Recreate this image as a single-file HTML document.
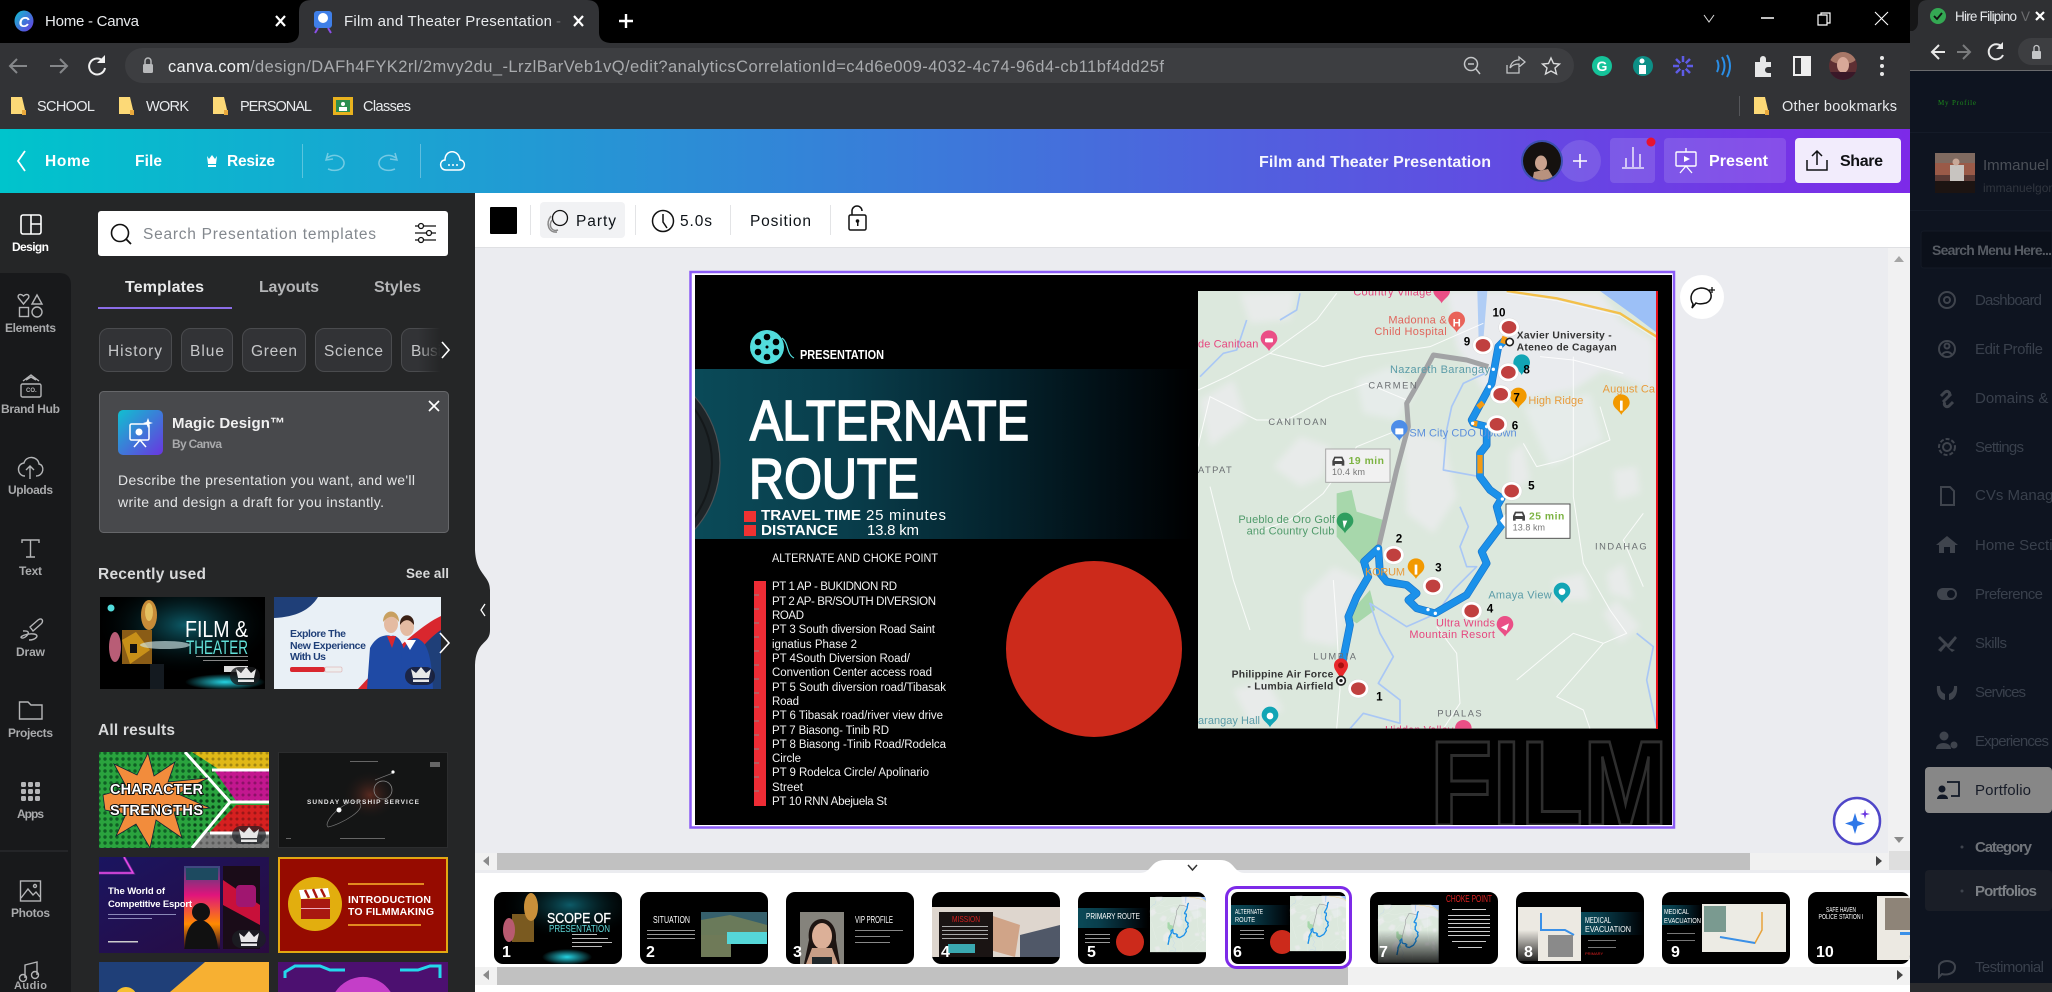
<!DOCTYPE html>
<html><head><meta charset="utf-8"><title>Film and Theater Presentation - Canva</title>
<style>html,body{margin:0;padding:0;background:#000;overflow:hidden;width:2052px;height:992px}svg{display:block;position:absolute;left:0;top:0}text{font-family:"Liberation Sans","DejaVu Sans",sans-serif}</style></head><body>
<svg width="2052" height="992" viewBox="0 0 2052 992" xmlns="http://www.w3.org/2000/svg">
<defs>
<filter id="soft" x="-10%" y="-10%" width="120%" height="120%"><feGaussianBlur stdDeviation="10"/></filter>
<linearGradient id="top" x1="0" x2="1" y1="0" y2="0"><stop offset="0" stop-color="#00c4cc"/><stop offset=".5" stop-color="#3d78da"/><stop offset="1" stop-color="#7d2ae8"/></linearGradient>
<linearGradient id="band" x1="0" x2="1" y1="0" y2="0"><stop offset="0" stop-color="#0a4a58"/><stop offset=".3" stop-color="#093e4c"/><stop offset=".62" stop-color="#04222c"/><stop offset=".88" stop-color="#010a0f"/><stop offset="1" stop-color="#000"/></linearGradient>
<linearGradient id="mg" x1="0" x2="1" y1="0" y2="1"><stop offset="0" stop-color="#10c0d0"/><stop offset="1" stop-color="#6a35e0"/></linearGradient>
<linearGradient id="fade" x1="0" x2="1" y1="0" y2="0"><stop offset="0" stop-color="#252627" stop-opacity="0"/><stop offset=".7" stop-color="#252627"/></linearGradient>
<linearGradient id="esp" x1="0" x2="1" y1="0" y2="1"><stop offset="0" stop-color="#1a1560"/><stop offset="1" stop-color="#2a0b40"/></linearGradient>
<linearGradient id="hot" x1="0" x2="0" y1="0" y2="1"><stop offset="0" stop-color="#3a4a80"/><stop offset=".35" stop-color="#e0147c"/><stop offset=".7" stop-color="#ff8a00"/><stop offset="1" stop-color="#200820"/></linearGradient>
<linearGradient id="fadeg" x1="0" x2="0" y1="0" y2="1"><stop offset="0" stop-color="#000" stop-opacity="0"/><stop offset="1" stop-color="#000" stop-opacity=".85"/></linearGradient>
<radialGradient id="glow"><stop offset="0" stop-color="#25d4e4"/><stop offset="1" stop-color="#25d4e4" stop-opacity="0"/></radialGradient>
<radialGradient id="orb"><stop offset="0" stop-color="#5a2a20"/><stop offset="1" stop-color="#141414" stop-opacity="0"/></radialGradient>
<radialGradient id="tglow"><stop offset="0" stop-color="#0d5b68"/><stop offset="1" stop-color="#000" stop-opacity="0"/></radialGradient>
<pattern id="dots" width="6" height="6" patternUnits="userSpaceOnUse"><circle cx="3" cy="3" r="1.7" fill="#0f5e24"/></pattern>
<pattern id="dots2" width="6" height="6" patternUnits="userSpaceOnUse"><circle cx="3" cy="3" r="1.5" fill="#000" fill-opacity=".28"/></pattern>
<path id="pin" d="M0 30C-6 17-25 9-25-7A25 25 0 1 1 25-7C25 9 6 17 0 30Z"/>
<path id="crown" d="M-8 3L-10-6-5-2 0-8 5-2 10-6 8 3ZM-8 4.500H8V7H-8Z"/>
<g id="car"><path d="M-18 12V-2L-12-15H12L18-2V12H10V7H-10V12Z" fill="#444"/><path d="M-9-10H9L12-2H-12Z" fill="#fff"/></g>
<clipPath id="cm"><rect x="24" y="33" width="1379" height="1313"/></clipPath>
<clipPath id="cb"><rect x="695" y="369" width="500" height="170"/></clipPath>
<clipPath id="cs"><rect x="695" y="275" width="977" height="550"/></clipPath>
<clipPath id="c1"><rect x="494" y="892" width="128" height="72" rx="9"/></clipPath>
<clipPath id="c2"><rect x="640" y="892" width="128" height="72" rx="9"/></clipPath>
<clipPath id="c3"><rect x="786" y="892" width="128" height="72" rx="9"/></clipPath>
<clipPath id="c4"><rect x="932" y="892" width="128" height="72" rx="9"/></clipPath>
<clipPath id="c5"><rect x="1078" y="892" width="128" height="72" rx="9"/></clipPath>
<clipPath id="c6"><rect x="1231" y="892" width="115" height="72" rx="7"/></clipPath>
<clipPath id="c7"><rect x="1370" y="892" width="128" height="72" rx="9"/></clipPath>
<clipPath id="c8"><rect x="1516" y="892" width="128" height="72" rx="9"/></clipPath>
<clipPath id="c9"><rect x="1662" y="892" width="128" height="72" rx="9"/></clipPath>
<clipPath id="c10"><rect x="1808" y="892" width="102" height="72" rx="9"/></clipPath>
<clipPath id="p1"><rect x="99" y="752" width="170" height="96"/></clipPath>
<clipPath id="p3"><rect x="99" y="857" width="170" height="96"/></clipPath>
<clipPath id="p5"><rect x="99" y="962" width="170" height="30"/></clipPath>
<clipPath id="p6"><rect x="278" y="962" width="170" height="30"/></clipPath>
<clipPath id="r1"><rect x="100" y="597" width="165" height="92"/></clipPath>
<clipPath id="r2"><rect x="274" y="597" width="167" height="92"/></clipPath>
<clipPath id="av"><circle cx="1542" cy="161" r="19"/></clipPath>
<clipPath id="av2"><circle cx="1843" cy="66" r="14"/></clipPath>

<g id="mapbase">
<rect x="24" y="33" width="1379" height="1313" fill="#dce8dd"/>
<g filter="url(#soft)">
<path d="M770 33H1230L1290 120 1390 180V330L1240 270 1150 330 1000 360 880 330 800 200Z" fill="#e9ebee"/>
<path d="M330 470L420 500 400 590 330 620 250 560ZM640 450L760 480 800 650 730 760 650 700ZM340 1080L440 1100 470 1000 520 900 430 860 340 950ZM130 1230L230 1200 280 1290 180 1330ZM1090 900L1180 880 1200 960 1100 960ZM960 520L1000 490 1020 600 960 640ZM30 360L130 300 170 420 60 500ZM1270 570L1340 560 1350 640 1280 660ZM150 40L320 33 300 120 180 130ZM1250 880L1300 850 1330 960 1260 940ZM1240 1000L1280 960 1350 1040 1290 1090Z" fill="#e8ebea"/>
<path d="M500 300L600 260 680 330 620 420 520 400ZM1000 380L1200 340 1240 480 1080 560Z" fill="#e6ecea"/>
</g>
<path d="M440 640L485 630 500 695 580 720 560 805 510 850 440 770ZM540 930L555 990 500 1030 470 1010Z" fill="#a7d7ab"/>
<path d="M1230 33H1403V160L1330 105Z" fill="#9cc0f7"/>
<path d="M862 33H892L880 180H866Z" fill="#b0cdf5"/>
<g fill="none" stroke="#a9c7f5" stroke-width="5" stroke-linejoin="round">
<path d="M885 280L820 310 785 380 770 450 760 570 870 590"/>
<path d="M810 680L835 740 810 800 830 860 860 860 790 930 740 1000 650 1040 540 970 570 1060 610 1130 565 1210 630 1260 630 1330 520 1300 480 1346"/>
<path d="M30 290L100 220 140 210 170 120M330 40L320 90 270 120"/>
<path d="M1340 1060L1390 1100 1370 1200 1400 1340"/>
</g>
<g fill="none" stroke="#fff" stroke-width="3" stroke-linejoin="round" opacity=".85">
<path d="M24 330L110 290 240 220 380 120 440 40"/>
<path d="M240 220L400 260 520 230 720 200 880 130"/>
<path d="M24 500L60 350 200 420 290 420 420 350 530 310 650 360"/>
<path d="M650 440L500 500 400 640 300 720 190 760"/>
<path d="M1200 1346L1180 1290 1100 1250 1240 1090 1310 1060 1260 990 1180 850 1150 650 1150 230"/>
<path d="M440 1346L450 1230 440 1040 430 900"/>
<path d="M740 1040L800 1120 810 1270 760 1346"/>
<path d="M1000 490L1040 560 1120 540 1260 480 1230 380"/>
<path d="M980 1200L1100 1100 1150 1060 1240 1090M60 620L130 900 180 1050M1050 230L1150 240 1300 280M1360 700L1300 780 1360 920"/>
</g>
<path d="M950 33L1100 55 1290 100 1400 170" fill="none" stroke="#f3c04a" stroke-width="7"/>
<path d="M950 40L1100 62 1290 107 1400 178" fill="none" stroke="#fff" stroke-width="1.500"/>
<path d="M565 805L620 570 655 440 650 370 690 300 730 225 830 240 895 260" fill="none" stroke="#a2a3a5" stroke-width="15" stroke-linejoin="round"/>
<path d="M453 1170L465 1110 480 1035 475 1010 500 950 535 890 522 845 565 805 570 880 590 905 650 915 680 940 655 960 680 985 735 1000 830 945 890 850 875 815 935 735 920 680 935 655 900 630 870 590 870 520 890 495 890 440 850 430 845 420 905 310 925 200 945 180" fill="none" stroke="#1a74c8" stroke-width="23" stroke-linejoin="round"/>
<path d="M453 1170L465 1110 480 1035 475 1010 500 950 535 890 522 845 565 805 570 880 590 905 650 915 680 940 655 960 680 985 735 1000 830 945 890 850 875 815 935 735 920 680 935 655 900 630 870 590 870 520 890 495 890 440 850 430 845 420 905 310 925 200 945 180" fill="none" stroke="#1b91ea" stroke-width="19" stroke-linejoin="round"/>
<path d="M870 525V580M864 382L880 368M850 430L862 432M938 190L945 170" fill="none" stroke="#f39a13" stroke-width="16"/>
<circle cx="565" cy="806" r="5" fill="#fff"/><circle cx="714" cy="989" r="5" fill="#fff"/><circle cx="736" cy="1000" r="5" fill="#fff"/><circle cx="937" cy="657" r="5" fill="#fff"/><circle cx="890" cy="440" r="5" fill="#fff"/><circle cx="848" cy="430" r="5" fill="#fff"/><circle cx="898" cy="320" r="5" fill="#fff"/><circle cx="910" cy="268" r="5" fill="#fff"/><circle cx="932" cy="202" r="5" fill="#fff"/>
</g>
<path id="route" d="M453 1170L465 1110 480 1035 475 1010 500 950 535 890 522 845 565 805 570 880 590 905 650 915 680 940 655 960 680 985 735 1000 830 945 890 850 875 815 935 735 920 680 935 655 900 630 870 590 870 520 890 495 890 440 850 430 845 420 905 310 925 200 945 180" fill="none" stroke="#1b91ea" stroke-width="30" stroke-linejoin="round"/>
</defs>

<!-- browser chrome -->
<rect width="2052" height="992" fill="#000"/>
<rect y="43" width="1910" height="86" fill="#323336"/>
<ellipse cx="24" cy="21" rx="9.500" ry="10.500" fill="url(#mg)"/><text x="24" y="27" font-size="15" font-style="italic" font-weight="700" fill="#fff" text-anchor="middle">C</text>
<text x="45" y="26" font-size="15" fill="#e8eaed" textLength="94">Home - Canva</text>
<path d="M276 16L285 26M285 16L276 26" stroke="#fff" stroke-width="2.200"/>
<path d="M286 43C296 43 299 38 299 32V12Q299 0 311 0H587Q599 0 599 12V32C599 38 602 43 612 43Z" fill="#323336"/>
<rect x="314" y="11" width="18" height="17" rx="3" fill="#3f7fe8"/><circle cx="323" cy="18" r="5" fill="#fff"/><path d="M318 28L315 33M328 28L331 33" stroke="#8a4fe8" stroke-width="2"/>
<text x="344" y="26" font-size="15" fill="#e8eaed" textLength="208">Film and Theater Presentation</text><text x="556" y="26" font-size="15" fill="#6c6d70">- P</text>
<rect x="566" y="6" width="8" height="28" fill="#323336"/>
<path d="M574 16L583 26M583 16L574 26" stroke="#fff" stroke-width="2.200"/>
<path d="M626 14V28M619 21H633" stroke="#fff" stroke-width="2.400"/>
<path d="M1704 15L1709 22 1714 15" fill="none" stroke="#ddd" stroke-width="1"/>
<path d="M1761 18H1774" stroke="#fff" stroke-width="1.500"/>
<path d="M1818 15H1827V25H1818ZM1821 15V13H1830V23H1827" fill="none" stroke="#fff" stroke-width="1.200"/>
<path d="M1875 12L1888 25M1888 12L1875 25" stroke="#fff" stroke-width="1.100"/>

<path d="M27 66H10M17 59L10 66 17 73" fill="none" stroke="#85878a" stroke-width="2"/>
<path d="M50 66H67M60 59L67 66 60 73" fill="none" stroke="#85878a" stroke-width="2"/>
<path d="M103 61A8 8 0 1 0 105 68" fill="none" stroke="#f1f1f1" stroke-width="2"/><path d="M105 55V63H97Z" fill="#f1f1f1"/>
<rect x="125" y="48" width="1449" height="35" rx="17.500" fill="#3d3e41"/>
<rect x="143" y="64" width="10" height="9" rx="1.500" fill="#b8b9bb"/><path d="M145 64V61A3 3 0 0 1 151 61V64" fill="none" stroke="#b8b9bb" stroke-width="1.500"/>
<text x="168" y="72" font-size="16.500" fill="#f1f3f4" textLength="82">canva.com</text>
<text x="250" y="72" font-size="16.500" fill="#a9abae" textLength="914">/design/DAFh4FYK2rl/2mvy2du_-LrzlBarVeb1vQ/edit?analyticsCorrelationId=c4d6e009-4032-4c74-96d4-cb11bf4dd25f</text>
<circle cx="1471" cy="64" r="6.500" fill="none" stroke="#c4c6c8" stroke-width="1.500"/><path d="M1476 69L1480 74M1468 64H1474" stroke="#c4c6c8" stroke-width="1.500"/>
<path d="M1507 65V73H1519V68M1510 68C1511 62 1515 60 1519 60V57L1525 62 1519 67V64C1515 64 1512 65 1510 68Z" fill="none" stroke="#c4c6c8" stroke-width="1.300"/>
<path d="M1551 58L1553.500 63.500 1559.500 64 1555 68 1556.500 74 1551 71 1545.500 74 1547 68 1542.500 64 1548.500 63.500Z" fill="none" stroke="#dadbdc" stroke-width="1.400"/>
<circle cx="1602" cy="66" r="10" fill="#15c39a"/><text x="1602" y="71" font-size="14" font-weight="700" fill="#fff" text-anchor="middle">G</text>
<circle cx="1643" cy="66" r="10" fill="#0d8f86"/><circle cx="1642" cy="61" r="2.500" fill="#fff"/><path d="M1639 65H1646V74H1639Z" fill="#fff"/>
<g stroke="#5e5ce6" stroke-width="2.500"><path d="M1683 56V76M1673 66H1693M1676 59L1690 73M1690 59L1676 73"/></g><circle cx="1683" cy="66" r="4" fill="#323336"/>
<path d="M1717 60Q1720 66 1717 72M1722 57Q1727 66 1722 75M1727 55Q1733 66 1727 77" fill="none" stroke="#2a8fe8" stroke-width="2"/>
<path d="M1755 62H1760V59A3 3 0 0 1 1766 59V62H1771V67H1768A3 3 0 0 0 1768 73H1771V77H1755Z" fill="#e6e7e8"/>
<rect x="1794" y="57" width="16" height="18" fill="none" stroke="#eee" stroke-width="2"/><rect x="1801" y="57" width="9" height="18" fill="#eee"/>
<circle cx="1843" cy="66" r="14" fill="#5e2f33"/><g clip-path="url(#av2)"><ellipse cx="1843" cy="57" rx="14" ry="7" fill="#a87868"/><ellipse cx="1843" cy="65" rx="6" ry="8" fill="#d8a898"/><rect x="1829" y="72" width="28" height="10" fill="#3a1828"/></g>
<circle cx="1882" cy="58" r="2" fill="#e8e8e8"/><circle cx="1882" cy="66" r="2" fill="#e8e8e8"/><circle cx="1882" cy="74" r="2" fill="#e8e8e8"/>

<g fill="#fcd977"><path d="M11 97H22L26 114H11Z"/><path d="M119 97H130L134 114H119Z"/><path d="M213 97H224L228 114H213Z"/><path d="M1754 97H1765L1769 114H1754Z"/></g>
<g fill="#e9a93c"><rect x="22" y="110" width="4" height="5"/><rect x="130" y="110" width="4" height="5"/><rect x="224" y="110" width="4" height="5"/><rect x="1765" y="110" width="4" height="5"/></g>
<text x="37" y="111" font-size="14.500" fill="#e8eaed" textLength="58">SCHOOL</text>
<text x="146" y="111" font-size="14.500" fill="#e8eaed" textLength="43">WORK</text>
<text x="240" y="111" font-size="14.500" fill="#e8eaed" textLength="72">PERSONAL</text>
<rect x="333" y="97" width="20" height="18" fill="#e8b21e"/><rect x="336" y="100" width="14" height="12" fill="#2c8f4f"/><circle cx="343" cy="104" r="2" fill="#fff"/><rect x="339" y="107" width="8" height="4" fill="#fff"/>
<text x="363" y="111" font-size="14.500" fill="#e8eaed" textLength="48">Classes</text>
<rect x="1739" y="96" width="1" height="20" fill="#55565a"/>
<text x="1782" y="111" font-size="14.500" fill="#e8eaed" textLength="115">Other bookmarks</text>

<!-- canva top bar -->
<rect y="129" width="1910" height="64" fill="url(#top)"/>
<path d="M25 151L18 161 25 171" fill="none" stroke="#fff" stroke-width="1.800"/>
<text x="45" y="166" font-size="15.500" font-weight="700" fill="#fff" textLength="45">Home</text>
<text x="135" y="166" font-size="15.500" font-weight="700" fill="#fff" textLength="27">File</text>
<path d="M207 156L209 159 212 155 215 159 217 156 216 164H208ZM208 165H216V167H208Z" fill="#fff"/>
<text x="227" y="166" font-size="15.500" font-weight="700" fill="#fff" textLength="48">Resize</text>
<rect x="302" y="144" width="1" height="34" fill="#fff" opacity=".3"/><rect x="420" y="144" width="1" height="34" fill="#fff" opacity=".3"/>
<path d="M328 153L326 160 333 159M327 158C336 152 345 158 344 164 343 170 335 172 328 169" fill="none" stroke="#fff" stroke-opacity=".4" stroke-width="1.500"/>
<path d="M395 153L397 160 390 159M396 158C387 152 378 158 379 164 380 170 388 172 395 169" fill="none" stroke="#fff" stroke-opacity=".4" stroke-width="1.500"/>
<path d="M446 170C439 170 439 160 445 160 445 149 459 149 460 160 466 160 466 170 459 170Z" fill="none" stroke="#fff" stroke-width="1.500"/><g fill="#fff"><circle cx="449" cy="165" r="1"/><circle cx="453" cy="165" r="1"/><circle cx="457" cy="165" r="1"/></g>
<text x="1259" y="167" font-size="16" font-weight="700" fill="#fff" fill-opacity=".95" textLength="232">Film and Theater Presentation</text>
<circle cx="1580" cy="161" r="21" fill="#fff" fill-opacity=".12"/><path d="M1580 154V168M1573 161H1587" stroke="#fff" stroke-width="1.600"/>
<circle cx="1542" cy="161" r="21" fill="#3c4fb0"/><circle cx="1542" cy="161" r="19" fill="#15110f"/><g clip-path="url(#av)"><ellipse cx="1541" cy="163" rx="6" ry="7.500" fill="#c9a28e"/><path d="M1534 172L1548 169 1556 182H1532Z" fill="#b8927e"/></g>
<rect x="1610" y="138" width="45" height="45" rx="4" fill="#fff" fill-opacity=".13"/>
<path d="M1622 168H1644M1626 167V158M1633 167V147M1640 167V154" stroke="#fff" stroke-width="1.300"/>
<circle cx="1651" cy="142" r="4.500" fill="#e8132f"/>
<rect x="1664" y="138" width="122" height="45" rx="4" fill="#fff" fill-opacity=".13"/>
<rect x="1676" y="152" width="20" height="14" rx="1" fill="none" stroke="#fff" stroke-width="1.400"/><path d="M1684 156L1690 159 1684 162Z" fill="#fff"/><path d="M1686 148V152M1680 173L1686 166 1692 173" fill="none" stroke="#fff" stroke-width="1.300"/>
<text x="1709" y="166" font-size="16" font-weight="700" fill="#fff" textLength="59">Present</text>
<rect x="1795" y="138" width="106" height="45" rx="4" fill="#f2ecfc"/>
<path d="M1807 160V170H1827V160M1817 165V151M1812 156L1817 151 1822 156" fill="none" stroke="#101114" stroke-width="1.500"/>
<text x="1840" y="166" font-size="16" font-weight="700" fill="#101114" textLength="43">Share</text>

<!-- canvas -->
<rect x="475" y="193" width="1435" height="799" fill="#ebecf0"/>
<rect x="475" y="193" width="1435" height="54" fill="#fff"/>
<rect x="475" y="247" width="1435" height="1" fill="#dfe0e3"/>
<rect x="490" y="207" width="27" height="27" rx="1" fill="#000"/>
<rect x="530" y="205" width="1" height="30" fill="#e3e4e6"/>
<rect x="540" y="202" width="85" height="36" rx="4" fill="#f1f2f4"/>
<circle cx="560" cy="218" r="7.500" fill="none" stroke="#111" stroke-width="1.300"/><path d="M552 220C548 226 552 232 558 230M551 216C545 224 549 233 557 232" fill="none" stroke="#888" stroke-width="1.500"/>
<text x="576" y="226" font-size="15.500" fill="#0e1318" textLength="40">Party</text>
<rect x="635" y="205" width="1" height="30" fill="#e3e4e6"/>
<circle cx="663" cy="221" r="10.500" fill="none" stroke="#111" stroke-width="1.500"/><path d="M663 214V222L667 228" fill="none" stroke="#111" stroke-width="1.500"/>
<text x="680" y="226" font-size="15.500" fill="#0e1318" textLength="32">5.0s</text>
<rect x="730" y="205" width="1" height="30" fill="#e3e4e6"/>
<text x="750" y="226" font-size="15.500" fill="#0e1318" textLength="61">Position</text>
<rect x="830" y="205" width="1" height="30" fill="#e3e4e6"/>
<rect x="849" y="215" width="17" height="15" rx="1.500" fill="none" stroke="#111" stroke-width="1.500"/><path d="M852 215V211A5 5 0 0 1 862 211" fill="none" stroke="#111" stroke-width="1.500"/><circle cx="857.500" cy="221" r="1.800" fill="#111"/><rect x="857" y="221" width="1.500" height="5" fill="#111"/>

<!-- vertical scroll -->
<rect x="1888" y="248" width="22" height="605" fill="#f1f1f2"/>
<path d="M1894 262L1899 256 1904 262Z" fill="#a5a5a5"/><path d="M1894 837L1899 843 1904 837Z" fill="#8a8a8a"/>

<!-- slide -->
<rect x="690.500" y="272" width="983.500" height="555.500" fill="#fff" stroke="#8b5cf6" stroke-width="2.500"/>
<rect x="695" y="275" width="977" height="550" fill="#000"/>
<g clip-path="url(#cs)">
<rect x="695" y="369" width="500" height="170" fill="url(#band)"/>
<g clip-path="url(#cb)"><circle cx="620" cy="463" r="100" fill="#1e2528" stroke="#4c5256" stroke-width="1.200"/><circle cx="620" cy="463" r="92" fill="none" stroke="#14181a" stroke-width="2"/></g>
<circle cx="767" cy="347" r="17" fill="#52dcdc"/>
<g fill="#000"><circle cx="767" cy="337" r="3.300"/><circle cx="767" cy="357" r="3.300"/><circle cx="758" cy="342" r="3.300"/><circle cx="776" cy="342" r="3.300"/><circle cx="758" cy="352" r="3.300"/><circle cx="776" cy="352" r="3.300"/><circle cx="767" cy="347" r="1.500"/></g>
<path d="M782 338C789 343 786 354 794 358" fill="none" stroke="#52dcdc" stroke-width="1.200"/>
<text x="800" y="359" font-size="13" font-weight="700" fill="#fff" textLength="84" lengthAdjust="spacingAndGlyphs">PRESENTATION</text>
<text x="750" y="440" font-size="57" fill="#fff" stroke="#fff" stroke-width="1.800" textLength="279" lengthAdjust="spacingAndGlyphs">ALTERNATE</text>
<text x="749" y="498" font-size="57" fill="#fff" stroke="#fff" stroke-width="1.800" textLength="170" lengthAdjust="spacingAndGlyphs">ROUTE</text>
<rect x="744" y="511" width="12" height="11" fill="#f03232"/><rect x="744" y="525" width="12" height="11" fill="#f03232"/>
<text x="761" y="520" font-size="15" font-weight="700" fill="#fff" textLength="100" lengthAdjust="spacingAndGlyphs">TRAVEL TIME</text>
<text x="761" y="535" font-size="15" font-weight="700" fill="#fff" textLength="77" lengthAdjust="spacingAndGlyphs">DISTANCE</text>
<text x="866" y="520" font-size="15" fill="#fff" textLength="80">25 minutes</text>
<text x="867" y="535" font-size="15" fill="#fff" textLength="52">13.8 km</text>
<text x="772" y="562" font-size="11.500" fill="#f2f2f2" textLength="166" lengthAdjust="spacingAndGlyphs">ALTERNATE AND CHOKE POINT</text>
<rect x="754" y="581" width="12" height="225" fill="#ee2c35"/>
<path d="M754 595H759M754 609H759M754 623H759M754 637H759M754 651H759M754 665H759M754 679H759M754 693H759M754 707H759M754 721H759M754 735H759M754 749H759M754 763H759M754 777H759M754 791H759" stroke="#888" stroke-width="1"/>
<g font-size="11.500" fill="#f2f2f2">
<text x="772" y="590" textLength="125">PT 1 AP - BUKIDNON RD</text>
<text x="772" y="605" textLength="164">PT 2 AP- BR/SOUTH DIVERSION</text>
<text x="772" y="619" textLength="32">ROAD</text>
<text x="772" y="633" textLength="163">PT 3 South diversion Road Saint</text>
<text x="772" y="648" textLength="85">ignatius Phase 2</text>
<text x="772" y="662" textLength="138">PT 4South Diversion Road/</text>
<text x="772" y="676" textLength="160">Convention Center access road</text>
<text x="772" y="691" textLength="174">PT 5 South diversion road/Tibasak</text>
<text x="772" y="705" textLength="27">Road</text>
<text x="772" y="719" textLength="171">PT 6 Tibasak road/river view drive</text>
<text x="772" y="734" textLength="117">PT 7 Biasong- Tinib RD</text>
<text x="772" y="748" textLength="174">PT 8 Biasong -Tinib Road/Rodelca</text>
<text x="772" y="762" textLength="29">Circle</text>
<text x="772" y="776" textLength="157">PT 9 Rodelca Circle/ Apolinario</text>
<text x="772" y="791" textLength="31">Street</text>
<text x="772" y="805" textLength="115">PT 10 RNN Abejuela St</text>
</g>
<circle cx="1094" cy="649" r="88" fill="#cc2a1b"/>
<text x="1430" y="825" font-size="121" font-weight="700" fill="none" stroke="#2e2e2e" stroke-width="3" textLength="238" lengthAdjust="spacingAndGlyphs">FILM</text>

<!-- map -->
<g transform="translate(1190 280) scale(.33333)" clip-path="url(#cm)">
<use href="#mapbase"/>
<g fill="#ea4f86"><use href="#pin" x="755" y="40"/><use href="#pin" x="237" y="183"/><use href="#pin" x="945" y="1040"/><use href="#pin" x="820" y="1352"/></g>
<use href="#pin" x="800" y="127" fill="#e9635a"/>
<use href="#pin" x="628" y="452" fill="#4d8de8"/>
<g fill="#12a5b5"><use href="#pin" x="995" y="255"/><use href="#pin" x="1116" y="940"/><use href="#pin" x="240" y="1312"/></g>
<g fill="#f29900"><use href="#pin" x="985" y="355"/><use href="#pin" x="1294" y="375"/><use href="#pin" x="678" y="867"/></g>
<use href="#pin" x="465" y="730" fill="#2f9e5f"/>
<g fill="#fff"><rect x="225" y="175" width="24" height="12" rx="3"/><rect x="616" y="445" width="24" height="18" rx="2"/><path d="M1290 362V392H1298V362ZM674 854V884H682V854Z"/><circle cx="1116" cy="935" r="10"/><circle cx="240" cy="1308" r="10"/><path d="M933 1042L957 1030 950 1052ZM458 722H472L462 745Z"/></g>
<text x="800" y="140" font-size="34" font-weight="700" fill="#fff" text-anchor="middle">H</text>
<g font-size="33">
<g fill="#e6477f"><text x="490" y="47" textLength="235">Country Village</text><text x="24" y="203" textLength="181">de Canitoan</text><text x="738" y="1040" textLength="177">Ultra Winds</text><text x="658" y="1074" textLength="257">Mountain Resort</text><text x="585" y="1360" textLength="205">Hidden Valley</text></g>
<g fill="#e0655c"><text x="595" y="130" textLength="175">Madonna &amp;</text><text x="553" y="165" textLength="217">Child Hospital</text></g>
<g fill="#5b9ca8"><text x="600" y="279" textLength="300">Nazareth Barangay</text><text x="895" y="955" textLength="190">Amaya View</text><text x="24" y="1332" textLength="186">arangay Hall</text></g>
<g fill="#6b6f72" font-size="28"><text x="535" y="326" textLength="145">CARMEN</text><text x="235" y="435" textLength="175">CANITOAN</text><text x="24" y="579" textLength="101">ATPAT</text><text x="1215" y="809" textLength="155">INDAHAG</text><text x="370" y="1139" textLength="128">LUMBIA</text><text x="742" y="1310" textLength="133">PUALAS</text></g>
<text x="658" y="470" fill="#5c8fdc" textLength="322">SM City CDO Uptown</text>
<g fill="#e89b3c"><text x="1015" y="372" textLength="165">High Ridge</text><text x="1238" y="337" textLength="157">August Ca</text><text x="525" y="887" textLength="120">KORUM</text></g>
<g fill="#4f9a6a"><text x="145" y="729" textLength="290">Pueblo de Oro Golf</text><text x="170" y="763" textLength="263">and Country Club</text></g>
<g fill="#333" font-weight="700" font-size="31"><text x="980" y="176" textLength="285">Xavier University -</text><text x="980" y="211" textLength="300">Ateneo de Cagayan</text><text x="125" y="1193" textLength="305">Philippine Air Force</text><text x="172" y="1228" textLength="258">- Lumbia Airfield</text></g>
</g>
<circle cx="959" cy="186" r="11" fill="#fff" stroke="#222" stroke-width="5"/>
<path d="M453 1198C445 1180 432 1170 432 1156A21 21 0 1 1 474 1156C474 1170 461 1180 453 1198Z" fill="#e8282b"/><circle cx="453" cy="1156" r="9" fill="#a50e0e"/>
<circle cx="453" cy="1202" r="13" fill="#fff" stroke="#222" stroke-width="5"/><circle cx="453" cy="1202" r="5" fill="#222"/>
<rect x="407" y="507" width="193" height="100" fill="#f1f1f1" stroke="#aaa" stroke-width="3"/>
<use href="#car" x="445" y="545"/>
<text x="476" y="552" font-size="31" font-weight="700" fill="#7cb342" textLength="106">19 min</text><text x="426" y="585" font-size="27" fill="#777" textLength="99">10.4 km</text>
<path d="M948 700L930 722 948 745Z" fill="#fff"/>
<rect x="948" y="672" width="192" height="103" fill="#fff" stroke="#555" stroke-width="3"/>
<use href="#car" x="987" y="710"/>
<text x="1017" y="718" font-size="31" font-weight="700" fill="#7cb342" textLength="106">25 min</text><text x="968" y="751" font-size="27" fill="#777" textLength="97">13.8 km</text>
<g fill="#fff" stroke="#ccc" stroke-width="1"><ellipse cx="505" cy="1226" rx="31" ry="28"/><ellipse cx="611" cy="825" rx="31" ry="28"/><ellipse cx="729" cy="918" rx="31" ry="28"/><ellipse cx="845" cy="993" rx="31" ry="28"/><ellipse cx="965" cy="633" rx="31" ry="28"/><ellipse cx="921" cy="433" rx="31" ry="28"/><ellipse cx="932" cy="343" rx="31" ry="28"/><ellipse cx="955" cy="277" rx="31" ry="28"/><ellipse cx="879" cy="196" rx="31" ry="28"/><ellipse cx="957" cy="142" rx="31" ry="28"/></g>
<g fill="#c0403f"><ellipse cx="505" cy="1226" rx="22" ry="19"/><ellipse cx="611" cy="825" rx="22" ry="19"/><ellipse cx="729" cy="918" rx="22" ry="19"/><ellipse cx="845" cy="993" rx="22" ry="19"/><ellipse cx="965" cy="633" rx="22" ry="19"/><ellipse cx="921" cy="433" rx="22" ry="19"/><ellipse cx="932" cy="343" rx="22" ry="19"/><ellipse cx="955" cy="277" rx="22" ry="19"/><ellipse cx="879" cy="196" rx="22" ry="19"/><ellipse cx="957" cy="142" rx="22" ry="19"/></g>
<g font-size="35" font-weight="700" fill="#000" text-anchor="middle"><text x="927" y="110">10</text><text x="831" y="196">9</text><text x="1010" y="280">8</text><text x="980" y="364">7</text><text x="975" y="449">6</text><text x="1024" y="629">5</text><text x="627" y="788">2</text><text x="745" y="874">3</text><text x="900" y="997">4</text><text x="568" y="1262">1</text></g>
</g>
<rect x="1656" y="291" width="2" height="438" fill="#e8101a"/>
</g>

<!-- floating buttons -->
<circle cx="1702" cy="297" r="22" fill="#fff"/><path d="M1693 304C1689 298 1691 289 1701 288 1713 288 1714 300 1706 303 1702 304 1698 304 1696 303L1692 308Z" fill="none" stroke="#111" stroke-width="1.500"/><path d="M1709 290H1715M1712 287V293" stroke="#111" stroke-width="1.300"/>
<circle cx="1857" cy="821" r="23" fill="#fff" stroke="#4f46c8" stroke-width="2.500"/><path d="M1855 813L1857.500 821 1865 823.500 1857.500 826 1855 834 1852.500 826 1845 823.500 1852.500 821Z" fill="#2f78e8"/><path d="M1865 809L1866 813 1870 814 1866 815 1865 819 1864 815 1860 814 1864 813Z" fill="#6a35e0"/>

<!-- horizontal scrollbars + filmstrip -->
<rect x="475" y="853" width="1435" height="17" fill="#f1f1f1"/>
<rect x="497" y="853" width="1253" height="17" fill="#c1c1c1"/>
<rect x="1889" y="851" width="21" height="21" fill="#dedede"/>
<path d="M489 856L483 861 489 866Z" fill="#8a8a8a"/><path d="M1876 856L1882 861 1876 866Z" fill="#444"/>
<rect x="475" y="870" width="1435" height="3" fill="#ebecf0"/>
<rect x="475" y="873" width="1435" height="119" fill="#fff"/>
<path d="M1140 873C1152 873 1150 860 1165 860H1220C1235 860 1233 873 1245 873Z" fill="#fff"/>
<path d="M1188 865L1192.500 870 1197 865" fill="none" stroke="#333" stroke-width="1.500"/>
<rect x="475" y="967" width="1435" height="18" fill="#f1f1f1"/>
<rect x="497" y="967" width="851" height="18" fill="#c1c1c1"/>
<path d="M489 970L483 975 489 980Z" fill="#8a8a8a"/><path d="M1897 970L1903 975 1897 980Z" fill="#444"/>

<!-- thumbs -->
<g clip-path="url(#c1)"><rect x="494" y="892" width="128" height="72" fill="#000"/><ellipse cx="570" cy="905" rx="70" ry="35" fill="url(#tglow)"/><ellipse cx="567" cy="957" rx="25" ry="8" fill="url(#glow)"/><rect x="512" y="914" width="22" height="28" fill="#7a5a20"/><ellipse cx="531" cy="907" rx="7" ry="14" fill="#c8903a"/><ellipse cx="509" cy="930" rx="6" ry="12" fill="#b85a70"/>
<text x="547" y="923" font-size="15" fill="#fff" stroke="#fff" stroke-width=".3" textLength="64" lengthAdjust="spacingAndGlyphs">SCOPE OF</text><text x="549" y="932" font-size="10" fill="#5fd8d8" textLength="61" lengthAdjust="spacingAndGlyphs">PRESENTATION</text>
<g fill="#bbb"><rect x="572" y="934" width="25" height="1"/><rect x="572" y="938" width="36" height="1"/><rect x="572" y="942" width="40" height="1"/><rect x="572" y="946" width="30" height="1"/></g><text x="502" y="957" font-size="16" font-weight="700" fill="#fff">1</text></g>
<g clip-path="url(#c2)"><rect x="640" y="892" width="128" height="72" fill="#000"/><text x="653" y="923" font-size="10" fill="#fff" textLength="37" lengthAdjust="spacingAndGlyphs">SITUATION</text>
<rect x="701" y="912" width="66" height="23" fill="#36606c"/><path d="M701 920L730 915 767 925V935H701Z" fill="#6a7a5a"/><rect x="701" y="935" width="30" height="22" fill="#6f7a58"/><rect x="727" y="932" width="40" height="12" fill="#55d6d8"/>
<g fill="#999"><rect x="647" y="930" width="48" height="1"/><rect x="647" y="934" width="48" height="1"/><rect x="647" y="938" width="48" height="1"/></g><text x="646" y="957" font-size="16" font-weight="700" fill="#fff">2</text></g>
<g clip-path="url(#c3)"><rect x="786" y="892" width="128" height="72" fill="#000"/><rect x="800" y="912" width="44" height="52" fill="#85837c"/><path d="M809 940C805 912 838 912 836 940L840 964H804Z" fill="#1e1512"/><ellipse cx="822" cy="936" rx="10" ry="13" fill="#dcb098"/><path d="M812 948L832 948 838 964H806Z" fill="#c89e86"/><rect x="812" y="957" width="20" height="7" fill="#20272a"/>
<text x="855" y="923" font-size="10" fill="#fff" textLength="38" lengthAdjust="spacingAndGlyphs">VIP PROFILE</text><g fill="#888"><rect x="855" y="930" width="48" height="1"/><rect x="855" y="936" width="35" height="1"/><rect x="855" y="942" width="35" height="1"/></g><text x="793" y="957" font-size="16" font-weight="700" fill="#fff">3</text></g>
<g clip-path="url(#c4)"><rect x="932" y="892" width="128" height="72" fill="#000"/><rect x="932" y="907" width="128" height="50" fill="#ded6ce"/><path d="M990 915L1020 925 1015 957 990 950Z" fill="#d0a488"/><path d="M1020 935L1060 925V957H1020Z" fill="#505868"/><rect x="939" y="912" width="54" height="45" fill="#1a1413"/><text x="952" y="922" font-size="8.500" fill="#d82020" textLength="28" lengthAdjust="spacingAndGlyphs">MISSION</text><g fill="#aaa"><rect x="942" y="926" width="46" height="1"/><rect x="942" y="930" width="46" height="1"/><rect x="942" y="934" width="46" height="1"/><rect x="942" y="938" width="46" height="1"/></g><rect x="948" y="944" width="27" height="9" fill="#3aa8b0"/><text x="941" y="957" font-size="16" font-weight="700" fill="#fff">4</text></g>
<g clip-path="url(#c5)"><rect x="1078" y="892" width="128" height="72" fill="#000"/><rect x="1078" y="908" width="70" height="20" fill="url(#band)"/><text x="1086" y="919" font-size="8.500" fill="#fff" textLength="54" lengthAdjust="spacingAndGlyphs">PRIMARY ROUTE</text><circle cx="1130" cy="942" r="14" fill="#cc2a1b"/><g fill="#999"><rect x="1085" y="934" width="25" height="1"/><rect x="1085" y="938" width="25" height="1"/><rect x="1085" y="942" width="25" height="1"/></g><g transform="translate(1150 897) scale(.042)"><use href="#mapbase" x="-24" y="-33"/><use href="#route" x="-24" y="-33"/></g><text x="1087" y="957" font-size="16" font-weight="700" fill="#fff">5</text></g>
<g clip-path="url(#c6)"><rect x="1231" y="892" width="115" height="72" fill="#000"/><rect x="1231" y="905" width="60" height="20" fill="url(#band)"/><text x="1235" y="914" font-size="7.500" fill="#fff" textLength="28" lengthAdjust="spacingAndGlyphs">ALTERNATE</text><text x="1235" y="922" font-size="7.500" fill="#fff" textLength="20" lengthAdjust="spacingAndGlyphs">ROUTE</text><circle cx="1282" cy="942" r="12" fill="#cc2a1b"/><g fill="#999"><rect x="1240" y="930" width="24" height="1"/><rect x="1240" y="934" width="24" height="1"/><rect x="1240" y="938" width="24" height="1"/></g><g transform="translate(1290 896) scale(.042)"><use href="#mapbase" x="-24" y="-33"/><use href="#route" x="-24" y="-33"/></g><text x="1233" y="957" font-size="16" font-weight="700" fill="#fff">6</text></g>
<rect x="1226.500" y="887.500" width="124" height="80" rx="10" fill="none" stroke="#7d2ae8" stroke-width="3"/>
<g clip-path="url(#c7)"><rect x="1370" y="892" width="128" height="72" fill="#000"/><g transform="translate(1378 905) scale(.044)"><use href="#mapbase" x="-24" y="-33"/><use href="#route" x="-24" y="-33"/></g><rect x="1370" y="930" width="70" height="34" fill="url(#fadeg)"/><text x="1446" y="902" font-size="10" fill="#e02020" textLength="46" lengthAdjust="spacingAndGlyphs">CHOKE POINT</text><g fill="#ccc"><rect x="1452" y="909" width="34" height="1"/><rect x="1448" y="915" width="42" height="1"/><rect x="1448" y="919" width="42" height="1"/><rect x="1448" y="923" width="42" height="1"/><rect x="1448" y="927" width="42" height="1"/><rect x="1448" y="931" width="42" height="1"/><rect x="1448" y="935" width="42" height="1"/><rect x="1452" y="941" width="34" height="1"/><rect x="1458" y="947" width="24" height="1"/></g><text x="1379" y="957" font-size="16" font-weight="700" fill="#fff">7</text></g>
<g clip-path="url(#c8)"><rect x="1516" y="892" width="128" height="72" fill="#000"/><rect x="1518" y="907" width="63" height="54" fill="#ece9e2"/><path d="M1541 913V930H1565L1574 935" fill="none" stroke="#3a90e8" stroke-width="2"/><rect x="1548" y="935" width="25" height="22" fill="#8a8a8a"/><rect x="1518" y="930" width="20" height="31" fill="url(#fadeg)"/><rect x="1581" y="912" width="63" height="23" fill="url(#band)"/><text x="1585" y="923" font-size="8" fill="#fff" textLength="26" lengthAdjust="spacingAndGlyphs">MEDICAL</text><text x="1585" y="932" font-size="8" fill="#fff" textLength="46" lengthAdjust="spacingAndGlyphs">EVACUATION</text><g fill="#777"><rect x="1588" y="940" width="28" height="1"/><rect x="1588" y="947" width="28" height="1"/></g><text x="1585" y="955" font-size="4" fill="#e02020">PRIMARY</text><text x="1524" y="957" font-size="16" font-weight="700" fill="#fff">8</text></g>
<g clip-path="url(#c9)"><rect x="1662" y="892" width="128" height="72" fill="#000"/><rect x="1662" y="905" width="40" height="20" fill="url(#band)"/><text x="1664" y="914" font-size="7.500" fill="#fff" textLength="25" lengthAdjust="spacingAndGlyphs">MEDICAL</text><text x="1664" y="923" font-size="7.500" fill="#fff" textLength="37" lengthAdjust="spacingAndGlyphs">EVACUATION</text><rect x="1702" y="904" width="84" height="48" fill="#ecebe4"/><path d="M1720 937L1755 943 1762 930V912" fill="none" stroke="#e8a33c" stroke-width="1.500"/><path d="M1720 937L1755 943" stroke="#3a90e8" stroke-width="2"/><rect x="1704" y="906" width="22" height="26" fill="#7a9a90"/><g fill="#777"><rect x="1667" y="933" width="28" height="1"/><rect x="1667" y="940" width="28" height="1"/></g><text x="1671" y="957" font-size="16" font-weight="700" fill="#fff">9</text></g>
<g clip-path="url(#c10)"><rect x="1808" y="892" width="102" height="72" fill="#000"/><text x="1841" y="912" font-size="7.500" fill="#fff" text-anchor="middle" textLength="30" lengthAdjust="spacingAndGlyphs">SAFE HAVEN</text><text x="1841" y="919" font-size="7.500" fill="#fff" text-anchor="middle" textLength="45" lengthAdjust="spacingAndGlyphs">POLICE STATION I</text><rect x="1877" y="896" width="33" height="64" fill="#ece9e2"/><rect x="1885" y="898" width="25" height="32" fill="#8e8478"/><rect x="1900" y="932" width="10" height="3" fill="#3a90e8"/><text x="1816" y="957" font-size="16" font-weight="700" fill="#fff">10</text></g>

<!-- left panel -->
<rect y="193" width="475" height="799" fill="#252627"/>
<path d="M475 550C476 575 490 575 490 590V630C490 645 476 640 475 665Z" fill="#252627"/>
<path d="M485 604L481 610 485 616" fill="none" stroke="#fff" stroke-width="1.300"/>
<path d="M0 273H59Q71 273 71 285V992H0Z" fill="#18191b"/>
<rect x="0" y="850.500" width="68" height="1" fill="#303134"/>

<!-- rail icons -->
<rect x="21" y="215" width="20" height="19" rx="2" fill="none" stroke="#fff" stroke-width="1.600"/><path d="M31 215V234M31 224H41" stroke="#fff" stroke-width="1.600"/>
<text x="12" y="251" font-size="12" font-weight="700" fill="#fff" textLength="37">Design</text>
<g fill="none" stroke="#b4b5b7" stroke-width="1.400">
<path d="M23.500 304L18.500 298C17 295 20 293 23.500 296 27 293 30 295 28.500 298Z"/><path d="M32 304L37 295 42 304Z"/><rect x="19.500" y="307.500" width="9" height="9"/><circle cx="37" cy="312" r="5"/>
<rect x="21" y="384" width="20" height="13" rx="1.500"/><path d="M23 381L31 375 39 381M26 380L31 377 36 380"/>
<path d="M25 476C17 476 16 464 24 463 26 455 38 456 39 464 45 465 44 476 36 476M30 479V466M26 470L30 466 34 470"/>
<path d="M22 543V540H39V543M30.500 540V557M26 557H35"/>
<path d="M23 631C34 630 25 639 22 638 18 637 27 633 34 634 40 635 36 640 29 640M30 627L38 620C42 617 44 621 41 624L33 631Z"/>
<path d="M19.500 719V702H28L31 705H42V719Z"/>
<rect x="20.500" y="881" width="20" height="20"/><path d="M21 898L28 889 33 895 36 892 40 897"/><circle cx="35" cy="886" r="1.500"/>
<path d="M25 978V965L37 962V975"/><circle cx="23" cy="978" r="3.500"/><circle cx="35" cy="975" r="3.500"/>
</g>
<text x="26" y="392" font-size="6" font-weight="700" fill="#b4b5b7">CO.</text>
<g fill="#b4b5b7"><rect x="21" y="782" width="5" height="5" rx="1.200"/><rect x="28" y="782" width="5" height="5" rx="1.200"/><rect x="35" y="782" width="5" height="5" rx="1.200"/><rect x="21" y="789" width="5" height="5" rx="1.200"/><rect x="28" y="789" width="5" height="5" rx="1.200"/><rect x="35" y="789" width="5" height="5" rx="1.200"/><rect x="21" y="796" width="5" height="5" rx="1.200"/><rect x="28" y="796" width="5" height="5" rx="1.200"/><rect x="35" y="796" width="5" height="5" rx="1.200"/></g>
<g font-size="12" font-weight="700" fill="#a9aaac">
<text x="5" y="332" textLength="51">Elements</text><text x="1" y="413" textLength="59">Brand Hub</text><text x="8" y="494" textLength="45">Uploads</text><text x="19" y="575" textLength="23">Text</text><text x="16" y="656" textLength="29">Draw</text><text x="8" y="737" textLength="45">Projects</text><text x="17" y="818" textLength="27">Apps</text><text x="11" y="917" textLength="39">Photos</text></g>
<text x="14" y="989" font-size="11" font-weight="700" fill="#a9aaac" textLength="33">Audio</text>

<!-- search -->
<rect x="98" y="211" width="350" height="45" rx="3" fill="#fff"/>
<circle cx="120" cy="233" r="8.500" fill="none" stroke="#111" stroke-width="1.600"/><path d="M126 239L131 244" stroke="#111" stroke-width="1.800"/>
<text x="143" y="239" font-size="15.500" fill="#83888e" textLength="233">Search Presentation templates</text>
<path d="M415 226H436M415 233H436M415 240H436" stroke="#111" stroke-width="1.300"/><g fill="#fff" stroke="#111" stroke-width="1.300"><circle cx="421" cy="226" r="2.500"/><circle cx="429" cy="233" r="2.500"/><circle cx="421" cy="240" r="2.500"/></g>

<text x="125" y="292" font-size="16" font-weight="700" fill="#e8e9ea" textLength="79">Templates</text>
<text x="259" y="292" font-size="16" font-weight="700" fill="#b4b5b7" textLength="60">Layouts</text>
<text x="374" y="292" font-size="16" font-weight="700" fill="#b4b5b7" textLength="47">Styles</text>
<rect x="98" y="307" width="134" height="2" fill="#8b6de8"/>

<g fill="#323336" stroke="#4a4b4e"><rect x="99.500" y="328.500" width="72" height="43" rx="9"/><rect x="181.500" y="328.500" width="51" height="43" rx="9"/><rect x="242.500" y="328.500" width="63" height="43" rx="9"/><rect x="315.500" y="328.500" width="76" height="43" rx="9"/><rect x="401.500" y="328.500" width="60" height="43" rx="9"/></g>
<g font-size="15.500" fill="#c6c7c9"><text x="108" y="356" textLength="54">History</text><text x="190" y="356" textLength="34">Blue</text><text x="251" y="356" textLength="46">Green</text><text x="324" y="356" textLength="59">Science</text><text x="411" y="356">Busi</text></g>
<rect x="418" y="326" width="32" height="48" fill="url(#fade)"/><rect x="449" y="326" width="26" height="48" fill="#252627"/>
<path d="M442 342L449 350 442 358" fill="none" stroke="#fff" stroke-width="1.600"/>

<rect x="99.500" y="391.500" width="349" height="141" rx="4" fill="#48494c" stroke="#66676a"/>
<rect x="118" y="410" width="45" height="45" rx="5" fill="url(#mg)"/>
<rect x="130" y="424" width="19" height="16" rx="1.500" fill="none" stroke="#fff" stroke-width="1.500"/><path d="M134 447L140 440 146 447" fill="none" stroke="#fff" stroke-width="1.500"/><circle cx="139" cy="432" r="3.500" fill="#fff"/><path d="M148 418L149.500 422 153 423 149.500 424 148 428 146.500 424 143 423 146.500 422Z" fill="#fff"/>
<text x="172" y="428" font-size="15" font-weight="700" fill="#f0f0f0" textLength="113">Magic Design™</text>
<text x="172" y="448" font-size="12" font-weight="700" fill="#a9aaac" textLength="50">By Canva</text>
<text x="118" y="485" font-size="14" fill="#e4e5e6" textLength="297">Describe the presentation you want, and we'll</text>
<text x="118" y="507" font-size="14" fill="#e4e5e6" textLength="266">write and design a draft for you instantly.</text>
<path d="M429 401L439 411M439 401L429 411" stroke="#fff" stroke-width="1.700"/>

<text x="98" y="579" font-size="15.500" font-weight="700" fill="#d8d9da" textLength="108">Recently used</text>
<text x="406" y="578" font-size="13.500" font-weight="700" fill="#d8d9da" textLength="43">See all</text>

<!-- recent 1 -->
<g clip-path="url(#r1)"><rect x="100" y="597" width="165" height="92" fill="#000"/><ellipse cx="185" cy="625" rx="90" ry="50" fill="url(#tglow)"/><ellipse cx="225" cy="682" rx="40" ry="8" fill="url(#glow)"/><rect x="122" y="630" width="30" height="34" fill="#8a5c16"/><path d="M122 640L136 632 150 650 130 664Z" fill="#c89018"/><rect x="130" y="644" width="7" height="9" fill="#111"/><ellipse cx="149" cy="615" rx="8" ry="15" fill="#c78c38"/><ellipse cx="149" cy="612" rx="4" ry="9" fill="#e4c060"/><ellipse cx="115" cy="647" rx="6" ry="15" fill="#b85d76"/><ellipse cx="165" cy="645" rx="25" ry="4" fill="#cfe6e6" fill-opacity=".65"/><circle cx="111" cy="608" r="3.500" fill="#52dcdc"/><rect x="150" y="664" width="14" height="25" fill="#141a20"/>
<text x="185" y="637" font-size="23" fill="#fff" textLength="63" lengthAdjust="spacingAndGlyphs">FILM &amp;</text><text x="186" y="654" font-size="19" fill="#62e0d8" textLength="62" lengthAdjust="spacingAndGlyphs">THEATER</text>
<g fill="#888"><rect x="196" y="656" width="52" height="1"/><rect x="203" y="660" width="45" height="1"/></g><rect x="224" y="666" width="24" height="6" fill="#ddd"/>
<rect x="230" y="667" width="30" height="18" rx="9" fill="#1a1c1e" fill-opacity=".8"/><use href="#crown" x="246" y="675" fill="#e8e8e8"/></g>
<!-- recent 2 -->
<g clip-path="url(#r2)"><rect x="274" y="597" width="167" height="92" fill="#e9f0f6"/><path d="M274 597H318C310 610 296 617 274 618Z" fill="#1f3f78"/><path d="M441 616C415 628 380 665 358 689H441Z" fill="#d9272e"/><path d="M441 630C428 638 405 665 395 689H441Z" fill="#1f3f78"/>
<path d="M367 689L370 648C376 636 386 634 391 636 396 634 402 640 404 650L403 689Z" fill="#1f4aa5"/><path d="M387 636H396L392 648Z" fill="#d9272e"/><path d="M400 689L402 652C408 638 416 636 420 640 428 644 432 660 433 689Z" fill="#1f4aa5"/><path d="M404 640H416L410 650Z" fill="#fff"/>
<ellipse cx="391" cy="624" rx="7" ry="9" fill="#e4bba2"/><path d="M383 622C383 608 399 608 399 622 394 614 388 616 383 622Z" fill="#c8a060"/>
<ellipse cx="407" cy="627" rx="7" ry="9" fill="#e4bba2"/><path d="M400 625C399 612 415 612 414 625 409 618 404 619 400 625Z" fill="#3a2015"/>
<g font-size="10.500" font-weight="700" fill="#1f3f78"><text x="290" y="637" textLength="56">Explore The</text><text x="290" y="649" textLength="76">New Experience</text><text x="290" y="660" textLength="36">With Us</text></g>
<rect x="290" y="667" width="35" height="5" rx="2" fill="#d9272e"/><rect x="325" y="667" width="17" height="5" rx="1" fill="#eee" stroke="#d9a0a0" stroke-width=".5"/>
<rect x="405" y="667" width="30" height="18" rx="9" fill="#1a1c2e" fill-opacity=".8"/><use href="#crown" x="421" y="675" fill="#e8e8e8"/></g>
<path d="M440 633L449 643 440 653" fill="none" stroke="#fff" stroke-width="1.600"/>

<text x="98" y="735" font-size="15.500" font-weight="700" fill="#d8d9da" textLength="77">All results</text>

<!-- result 1 -->
<g clip-path="url(#p1)"><rect x="99" y="752" width="170" height="96" fill="#2aa33e"/><rect x="99" y="752" width="170" height="96" fill="url(#dots)"/>
<path d="M290 752H286V770H220L192 752Z" fill="#e0b817"/><path d="M214 770H269V801H236Z" fill="#c3178f"/><path d="M236 805H269V832H210Z" fill="#d62020"/><path d="M205 832H269V848H192Z" fill="#7e7e7e"/>
<rect x="190" y="752" width="90" height="96" fill="url(#dots2)"/>
<path d="M185 752L230 802 192 848M212 770H269M230 802H269M210 833H269" fill="none" stroke="#fff" stroke-width="3"/>
<path d="M103 795L127 788 114 764 137 775 148 753 154 776 175 762 168 782 208 778 178 794 210 808 174 812 182 838 156 820 150 848 136 824 116 836 126 814 105 810Z" fill="#f28c3c" stroke="#123" stroke-width=".8"/>
<g font-size="14.500" font-weight="700" fill="#fff" stroke="#111" stroke-width="2" style="paint-order:stroke"><text x="110" y="794" textLength="93">CHARACTER</text><text x="110" y="815" textLength="93">STRENGTHS</text></g>
<rect x="232" y="826" width="34" height="18" rx="9" fill="#1c2024" fill-opacity=".7"/><use href="#crown" x="249" y="835" fill="#e8e8e8"/></g>
<!-- result 2 -->
<rect x="278.500" y="752.500" width="169" height="95" fill="#141515" stroke="#2c2d2e"/>
<ellipse cx="370" cy="795" rx="28" ry="25" fill="url(#orb)"/>
<text x="307" y="804" font-size="6.500" font-weight="700" fill="#e4e4e4" textLength="112">SUNDAY WORSHIP SERVICE</text>
<circle cx="383" cy="790" r="9" fill="none" stroke="#888" stroke-width=".8"/><path d="M375 780L393 773M328 827C340 825 370 808 358 802 346 798 322 822 328 827Z" fill="none" stroke="#777" stroke-width=".7"/><circle cx="393" cy="772" r="1.600" fill="#fff"/><circle cx="339" cy="810" r="2.500" fill="#fff"/>
<g fill="#666"><rect x="350" y="761" width="28" height="1"/><rect x="430" y="762" width="10" height="5"/><rect x="340" y="838" width="45" height="1"/><rect x="286" y="838" width="5" height="1"/></g>
<!-- result 3 -->
<g clip-path="url(#p3)"><rect x="99" y="857" width="170" height="96" fill="url(#esp)"/><path d="M99 873H133L124 857" fill="none" stroke="#e84ae8" stroke-width="1.500"/><path d="M99 873H133L124 857" fill="none" stroke="#e84ae8" stroke-width="3" stroke-opacity=".35"/>
<rect x="184" y="866" width="36" height="83" fill="url(#hot)"/><rect x="223" y="866" width="37" height="83" fill="#1a0c18"/><path d="M223 880L260 905V925L223 905Z" fill="#c8103a"/><rect x="236" y="885" width="20" height="22" rx="4" fill="#a01670"/><rect x="186" y="868" width="32" height="12" fill="#1d4a60"/>
<path d="M185 949C185 925 195 920 200 920 205 920 216 925 218 949Z" fill="#111"/><circle cx="201" cy="912" r="9" fill="#111"/>
<g font-size="9.500" font-weight="700" fill="#fff"><text x="108" y="894" textLength="57">The World of</text><text x="108" y="907" textLength="84">Competitive Esport</text></g>
<g fill="#8a88b8"><rect x="108" y="914" width="68" height="1"/><rect x="108" y="918" width="44" height="1"/></g><rect x="108" y="941" width="30" height="1.500" fill="#ccc"/>
<rect x="232" y="930" width="34" height="18" rx="9" fill="#1c2024" fill-opacity=".75"/><use href="#crown" x="249" y="939" fill="#e8e8e8"/></g>
<!-- result 4 -->
<rect x="279" y="858" width="168" height="94" fill="#960b00" stroke="#e3a812" stroke-width="2"/>
<circle cx="315" cy="904" r="27" fill="#e2ae0e"/>
<rect x="301" y="899" width="29" height="20" fill="#a81810"/><path d="M301 899L299 890 328 888 330 897Z" fill="#fff"/><path d="M305 890L309 898M313 889L317 898M321 889L325 897" stroke="#a81810" stroke-width="2.500"/><rect x="301" y="908" width="29" height="1" fill="#eab"/>
<rect x="348" y="883" width="76" height="2" fill="#e28a20"/>
<g font-size="10.500" font-weight="700" fill="#fff"><text x="348" y="903" textLength="83">INTRODUCTION</text><text x="348" y="915" textLength="86">TO FILMMAKING</text></g>
<rect x="348" y="924" width="73" height="2" fill="#e28a20"/>
<!-- result 5,6 -->
<g clip-path="url(#p5)"><rect x="99" y="962" width="170" height="30" fill="#1f3f78"/><path d="M205 962H269V992H170Z" fill="#f7b032"/><path d="M116.800 992A11 11 0 0 1 135.200 992Z" fill="#f7c032"/></g>
<g clip-path="url(#p6)"><rect x="278" y="962" width="170" height="30" fill="#4c1070"/><path d="M335.300 992A33 33 0 0 1 390.700 992Z" fill="#c43ec8"/><path d="M285 978V972L295 966H320L330 970H345M400 970H418L430 966H440V978" fill="none" stroke="#24d8ec" stroke-width="3"/></g>

<!-- right window -->
<rect x="1910" y="0" width="142" height="992" fill="#0e1420"/>
<rect x="1910" y="0" width="142" height="31" fill="#161617"/>
<path d="M1910 32Q1918 30 1918 22V10Q1918 0 1928 0H2052V32Z" fill="#2f3033"/>
<rect x="1910" y="31" width="142" height="39" fill="#2f3033"/>
<rect x="1910" y="70" width="142" height="1" fill="#6a6b6e"/>
<circle cx="1938" cy="16" r="8" fill="#34a853"/><path d="M1934 16L1937 19 1942 13" fill="none" stroke="#111" stroke-width="1.800"/>
<text x="1955" y="21" font-size="13.500" fill="#e8eaed" textLength="62">Hire Filipino</text><text x="2021" y="21" font-size="13.500" fill="#6c6d70">V</text>
<path d="M2036 12L2044 20M2044 12L2036 20" stroke="#fff" stroke-width="2.200"/>
<path d="M1945 52H1932M1939 45L1932 52 1939 59" fill="none" stroke="#e8e8e8" stroke-width="2"/>
<path d="M1957 52H1970M1963 45L1970 52 1963 59" fill="none" stroke="#7a7b7d" stroke-width="2"/>
<path d="M2002 47A7.500 7.500 0 1 0 2003 55" fill="none" stroke="#e8e8e8" stroke-width="2"/><path d="M2003 42V49H1996Z" fill="#e8e8e8"/>
<path d="M2052 38H2031.500A13.500 13.500 0 0 0 2031.500 65H2052Z" fill="#3d3e41"/>
<rect x="2032" y="51" width="9" height="8" rx="1" fill="#c4c6c8"/><path d="M2034 51V48A2.500 2.500 0 0 1 2039 48V51" fill="none" stroke="#c4c6c8" stroke-width="1.300"/>
<text x="1938" y="105" font-size="7" fill="#1b8a1b" style="font-family:'Liberation Serif',serif" textLength="38">My Profile</text>
<rect x="1910" y="132" width="142" height="1" fill="#141b28"/>
<rect x="1935" y="153" width="40" height="40" rx="3" fill="#5a3a35"/><rect x="1935" y="153" width="40" height="10" fill="#7f6a60"/><rect x="1935" y="163" width="40" height="12" fill="#9a5a48"/><rect x="1950" y="165" width="14" height="17" fill="#c8c4c0"/><circle cx="1956" cy="162" r="3.500" fill="#c8a898"/><rect x="1935" y="181" width="40" height="12" fill="#1c1412"/>
<text x="1983" y="170" font-size="15" fill="#4b5058">Immanuel G</text>
<text x="1983" y="192" font-size="12" fill="#31363f">immanuelgomez</text>
<rect x="1910" y="210" width="142" height="1" fill="#141b28"/>
<path d="M2052 231H1924Q1921 231 1921 234V265Q1921 268 1924 268H2052Z" fill="#0b101a" stroke="#141a26"/>
<text x="1932" y="255" font-size="14" font-weight="700" fill="#565b63" textLength="120">Search Menu Here...</text>
<g font-size="15" fill="#39404c">
<text x="1975" y="305" textLength="67">Dashboard</text><text x="1975" y="354" textLength="68">Edit Profile</text><text x="1975" y="403">Domains &amp; U</text><text x="1975" y="452" textLength="49">Settings</text><text x="1975" y="500">CVs Manage</text><text x="1975" y="550">Home Section</text><text x="1975" y="599" textLength="68">Preference</text><text x="1975" y="648" textLength="32">Skills</text><text x="1975" y="697" textLength="51">Services</text><text x="1975" y="746" textLength="74">Experiences</text><text x="1975" y="972" textLength="69">Testimonial</text>
</g>
<g fill="none" stroke="#3f444d" stroke-width="2">
<circle cx="1947" cy="300" r="8"/><circle cx="1947" cy="300" r="3"/>
<circle cx="1947" cy="349" r="8"/><circle cx="1947" cy="346" r="2.500"/><path d="M1942 355C1944 351 1950 351 1952 355"/>
<path d="M1943 402L1951 394M1941 396L1945 392C1948 390 1951 393 1949 396M1953 402L1949 406C1946 408 1943 405 1945 402" stroke-width="3"/>
<circle cx="1947" cy="447" r="4"/><circle cx="1947" cy="447" r="8" stroke-dasharray="4 2"/>
<path d="M1941 487H1950L1954 491V505H1941Z"/>
<path d="M1939 967C1939 959 1955 959 1955 967 1955 975 1945 975 1942 974L1939 977Z"/>
</g>
<path d="M1936 545L1947 536 1958 545H1955V553H1950V547H1944V553H1939V545Z" fill="#3f444d"/>
<rect x="1937" y="588" width="20" height="12" rx="6" fill="#3f444d"/><circle cx="1951" cy="594" r="4" fill="#0e1420"/>
<path d="M1940 636L1948 644 1955 636 1957 638 1949 648 1955 650 1952 652 1946 646 1941 652 1938 650 1944 644 1938 638Z" fill="#3f444d"/>
<path d="M1937 686C1936 694 1940 700 1945 700V694C1941 692 1940 690 1940 686ZM1957 686C1958 694 1954 700 1949 700V694C1953 692 1954 690 1954 686Z" fill="#3f444d"/>
<circle cx="1944" cy="736" r="4.500" fill="#3f444d"/><path d="M1936 749C1936 741 1951 741 1951 749Z" fill="#3f444d"/><circle cx="1954" cy="745" r="3.500" fill="#3f444d"/>
<rect x="1925" y="767" width="127" height="46" rx="4" fill="#878787"/>
<path d="M1947 782H1959V796H1951" fill="none" stroke="#111826" stroke-width="1.800"/><circle cx="1942" cy="789" r="3.500" fill="#111826"/><path d="M1937 799C1937 793 1948 793 1948 799Z" fill="#111826"/>
<text x="1975" y="795" font-size="15" fill="#171c28" textLength="56">Portfolio</text>
<circle cx="1962" cy="847" r="1.500" fill="#3f444d"/>
<text x="1975" y="852" font-size="15" font-weight="700" fill="#6f7379" textLength="57">Category</text>
<rect x="1925" y="870" width="127" height="41" rx="4" fill="#1a1e27"/>
<circle cx="1962" cy="891" r="1.500" fill="#3f444d"/>
<text x="1975" y="896" font-size="15" font-weight="700" fill="#7c8085" textLength="62">Portfolios</text>
<rect x="1910" y="983" width="142" height="9" fill="#2a2b2e"/>
</svg>
</body></html>
